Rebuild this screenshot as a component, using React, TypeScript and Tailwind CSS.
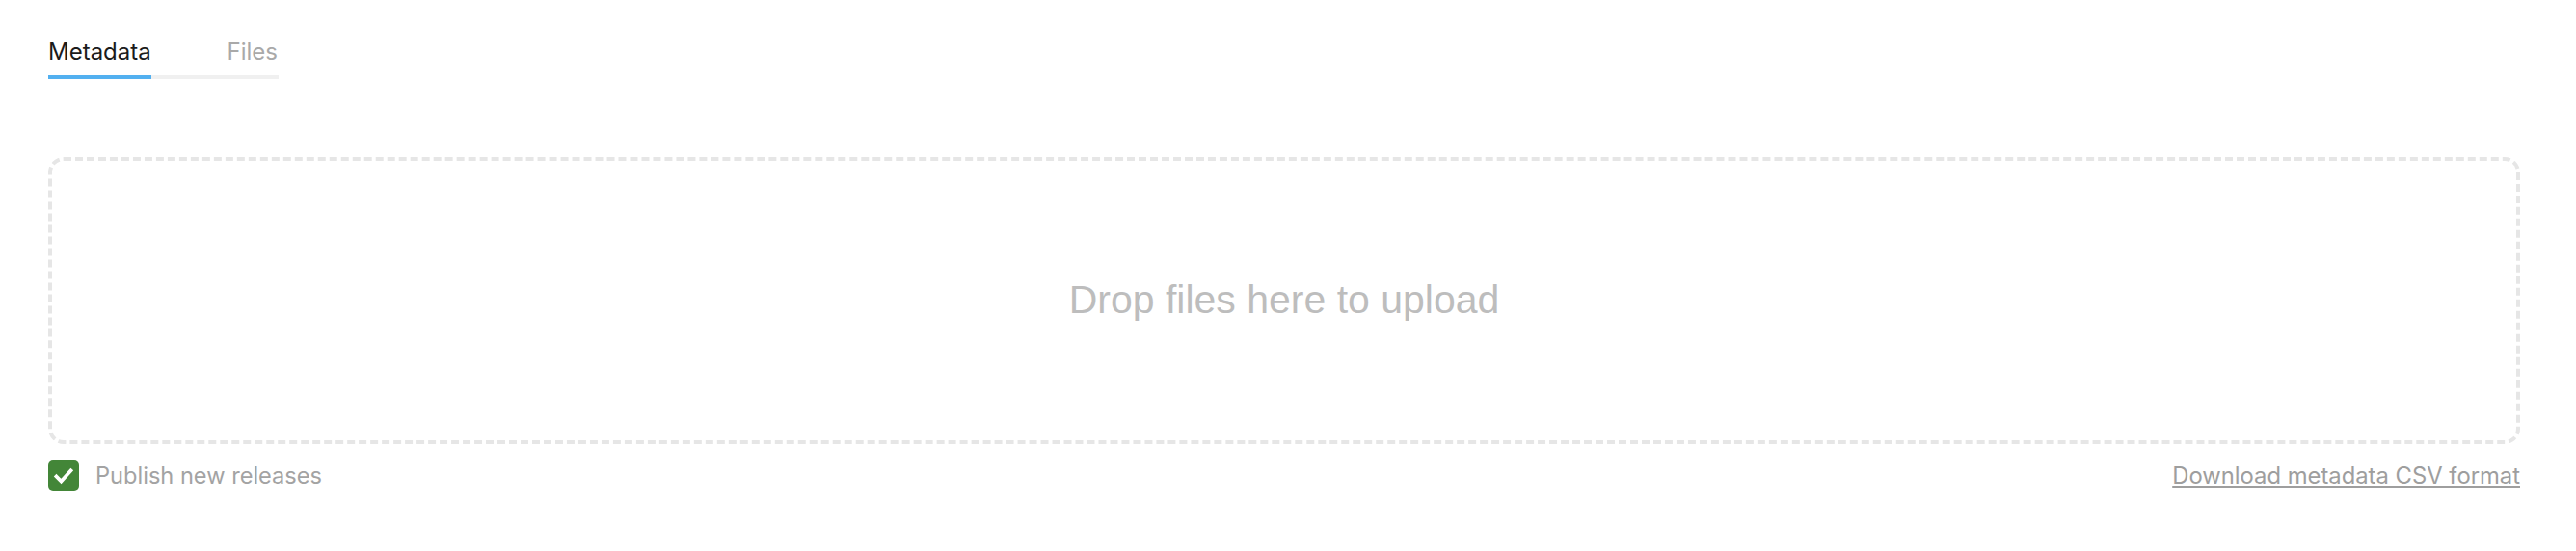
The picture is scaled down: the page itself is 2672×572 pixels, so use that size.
import React, { useState } from 'react';

export default function App() {
  const [tab, setTab] = useState<'metadata' | 'files'>('metadata');
  const [publish, setPublish] = useState(true);

  return (
    <div className="min-h-screen bg-white pl-[50px] pr-[58px] pt-[38px] font-['Inter',sans-serif]">
      {/* Tabs */}
      <div className="flex">
        <button
          onClick={() => setTab('metadata')}
          className="flex w-[107px] flex-col items-start"
        >
          <span className={`h-[32px] text-[24px] leading-[32px] ${tab === 'metadata' ? 'text-[#1b1b1b]' : 'text-[#a9a9a9]'}`}>
            Metadata
          </span>
          <span className={`mt-[8px] h-[4px] w-full ${tab === 'metadata' ? 'bg-[#52b0f0]' : 'bg-[#f0f0f0]'}`} />
        </button>
        <button
          onClick={() => setTab('files')}
          className="flex w-[132px] flex-col items-end"
        >
          <span className={`h-[32px] pr-[1px] text-[24px] leading-[32px] ${tab === 'files' ? 'text-[#1b1b1b]' : 'text-[#a9a9a9]'}`}>
            Files
          </span>
          <span className={`mt-[8px] h-[4px] w-full ${tab === 'files' ? 'bg-[#52b0f0]' : 'bg-[#f0f0f0]'}`} />
        </button>
      </div>

      {/* Drop zone */}
      <div className="mt-[81px] flex h-[298px] items-center justify-center rounded-[16px] border-[4px] border-dashed border-[#e6e6e6]">
        <span className="font-['Liberation_Sans',Arial,sans-serif] text-[41px] text-[#bdbdbd]">
          Drop files here to upload
        </span>
      </div>

      {/* Footer row */}
      <div className="mt-[17px] flex items-center justify-between">
        <label className="flex cursor-pointer items-center gap-[17px]">
          <span
            onClick={() => setPublish(!publish)}
            className={`flex h-[32px] w-[32px] items-center justify-center rounded-[5px] ${publish ? 'bg-[#438638]' : 'border-2 border-[#cccccc] bg-white'}`}
          >
            {publish && (
              <svg width="22" height="22" viewBox="0 0 22 22" fill="none">
                <path d="M3.5 11.5 L8.5 16.5 L18.5 5.5" stroke="white" strokeWidth="3.8" strokeLinecap="square" strokeLinejoin="miter" />
              </svg>
            )}
          </span>
          <span className="text-[23.6px] leading-[32px] text-[#a3a3a3]">Publish new releases</span>
        </label>
        <a href="#" className="text-[23.8px] leading-[32px] text-[#9e9e9e] underline underline-offset-[3px]">
          Download metadata CSV format
        </a>
      </div>
    </div>
  );
}
